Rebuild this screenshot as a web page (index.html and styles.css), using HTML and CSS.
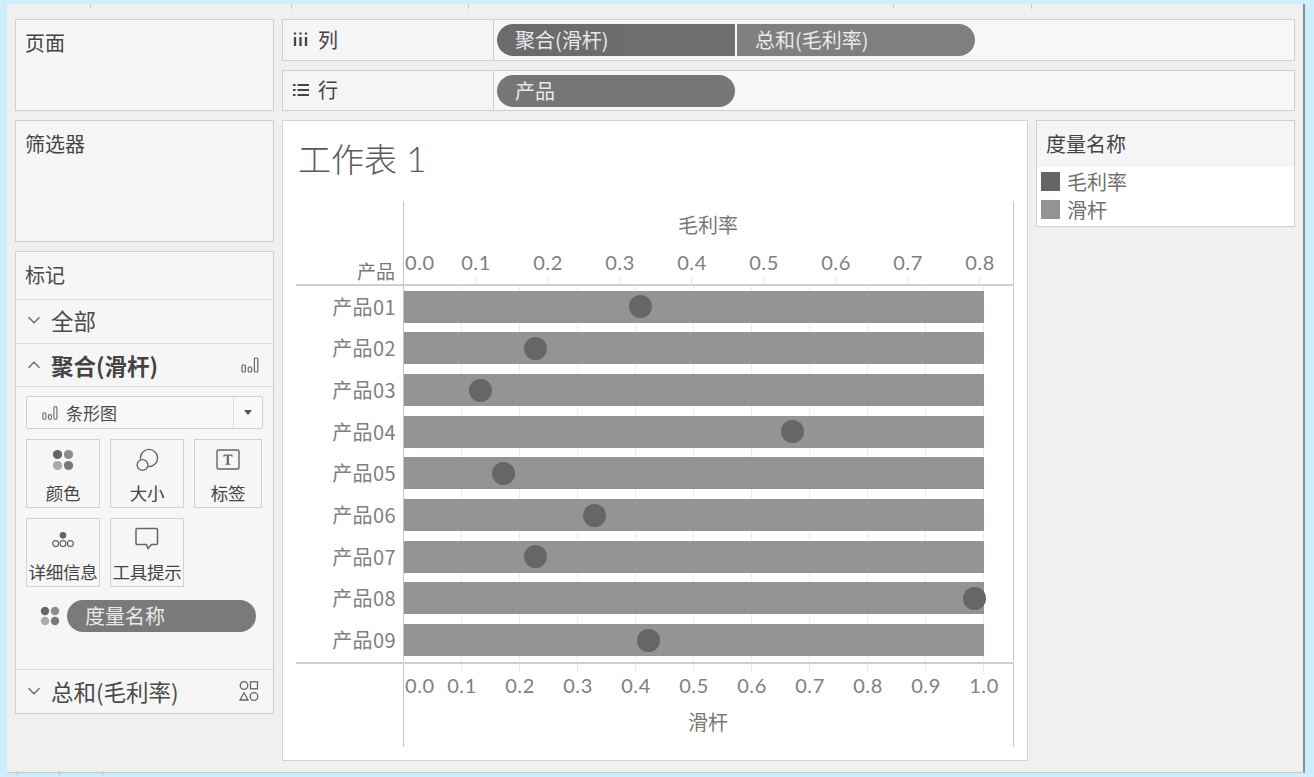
FILE: index.html
```html
<!DOCTYPE html>
<html lang="zh">
<head>
<meta charset="utf-8">
<title>工作表 1</title>
<link rel="stylesheet" href="styles.css">
</head>
<body>
<svg class="defs" width="0" height="0" aria-hidden="true">
  <symbol id="bars" viewBox="0 0 18 18">
    <g fill="none" stroke="#666" stroke-width="1.2"><rect x="1" y="9" width="3.4" height="7" rx="1"/><rect x="7.2" y="11" width="3.4" height="5" rx="1"/><rect x="13.4" y="2" width="3.4" height="14" rx="1"/></g>
  </symbol>
  <symbol id="dots" viewBox="0 0 22 22">
    <circle cx="5.5" cy="5.5" r="4.6" fill="#666"/><circle cx="16.5" cy="5.5" r="4.6" fill="#8c8c8c"/><circle cx="5.5" cy="16.5" r="4.6" fill="#aaa"/><circle cx="16.5" cy="16.5" r="4.6" fill="#777"/>
  </symbol>
</svg>
<div class="app">
  <i class="tick t1"></i><i class="tick t2"></i><i class="tick t3"></i><i class="tick t4"></i><i class="tick t5"></i>
  <i class="tick b1"></i><i class="tick b2"></i><i class="tick b3"></i>
  <aside class="side">
    <section class="panel pages"><h2 class="panel-title">页面</h2></section>
    <section class="panel filters"><h2 class="panel-title">筛选器</h2></section>
    <section class="panel marks">
      <h2 class="marks-title">标记</h2>
      <div class="mark-row all">
        <svg class="chev" viewBox="0 0 14 8"><path d="M1.5 1.2 7 6.8l5.5-5.6" fill="none" stroke="#666" stroke-width="1.3"/></svg>
        <span>全部</span>
      </div>
      <div class="mark-row agg">
        <svg class="chev" viewBox="0 0 14 8"><path d="M1.5 6.8 7 1.2l5.5 5.6" fill="none" stroke="#666" stroke-width="1.3"/></svg>
        <strong>聚合(滑杆)</strong>
        <svg class="row-icon"><use href="#bars"/></svg>
      </div>
      <div class="marks-body">
        <div class="select">
          <svg class="select-icon"><use href="#bars"/></svg>
          <span class="select-text">条形图</span>
          <span class="select-arrow"></span>
        </div>
        <div class="cards">
          <div class="card">
            <svg class="card-icon" viewBox="0 0 24 24"><use href="#dots" width="22" height="22" x="1" y="1"/></svg>
            <span>颜色</span>
          </div>
          <div class="card">
            <svg class="card-icon" viewBox="0 0 24 24"><g fill="none" stroke="#666" stroke-width="1.4"><circle cx="14" cy="10" r="8.6"/><circle cx="7.5" cy="17" r="5.4" fill="#f6f6f6"/></g></svg>
            <span>大小</span>
          </div>
          <div class="card">
            <svg class="card-icon" viewBox="0 0 24 24"><rect x="1" y="2" width="22" height="19" rx="1.5" fill="none" stroke="#666" stroke-width="1.4"/><path d="M7.5 6.5h9v2.6h-.8l-.5-1.4h-2.3v8h1.4v1h-5v-1h1.4v-8H8.800l-.5 1.400h-.8z" fill="#666"/></svg>
            <span>标签</span>
          </div>
          <div class="card">
            <svg class="card-icon" viewBox="0 0 26 24"><circle cx="13" cy="8" r="3.600" fill="#666"/><g fill="none" stroke="#666" stroke-width="1.300"><circle cx="5" cy="17" r="3.200"/><circle cx="13" cy="17" r="3.200"/><circle cx="21" cy="17" r="3.200"/></g></svg>
            <span>详细信息</span>
          </div>
          <div class="card">
            <svg class="card-icon" viewBox="0 0 24 24"><path d="M2.500 1.500h19a1 1 0 0 1 1 1v14a1 1 0 0 1-1 1h-5l-3.500 4-1.500-4h-9.500a1 1 0 0 1-1-1v-14a1 1 0 0 1 1-1z" fill="none" stroke="#666" stroke-width="1.500"/></svg>
            <span>工具提示</span>
          </div>
        </div>
        <div class="field">
          <svg class="field-icon"><use href="#dots"/></svg>
          <div class="pill field-pill">度量名称</div>
        </div>
      </div>
      <div class="mark-row sum">
        <svg class="chev" viewBox="0 0 14 8"><path d="M1.5 1.2 7 6.8l5.5-5.6" fill="none" stroke="#666" stroke-width="1.3"/></svg>
        <span>总和(毛利率)</span>
        <svg class="row-icon shapes" viewBox="0 0 20 22"><g fill="none" stroke="#666" stroke-width="1.300"><circle cx="5" cy="5.500" r="3.800"/><rect x="11.500" y="1.800" width="7" height="7"/><path d="M5 12.800 9 20H1z"/><circle cx="15" cy="16.500" r="3.800"/></g></svg>
      </div>
    </section>
  </aside>
  <main class="main">
    <div class="shelf">
      <div class="shelf-label">
        <svg class="shelf-icon" viewBox="0 0 16 16"><path d="M2 1.500v2M2 6v9M7.500 1.500v2M7.500 6v9M13 1.500v2M13 6v9" stroke="#444" stroke-width="2.300" fill="none"/></svg>
        <span>列</span>
      </div>
      <div class="shelf-pills">
        <div class="pill pill-left">聚合(滑杆)</div>
        <div class="pill pill-right">总和(毛利率)</div>
      </div>
    </div>
    <div class="shelf">
      <div class="shelf-label">
        <svg class="shelf-icon" viewBox="0 0 16 16"><path d="M0 3h2.500M4.500 3H16M0 8h2.500M4.500 8H16M0 13h2.500M4.500 13H16" stroke="#444" stroke-width="1.800" fill="none"/></svg>
        <span>行</span>
      </div>
      <div class="shelf-pills">
        <div class="pill pill-single">产品</div>
      </div>
    </div>
    <div class="work">
      <section class="sheet">
        <h1 class="sheet-title">工作表 <span class="title-num">1</span></h1>
        <div class="chart">
          <div class="chart-head">
            <div class="corner">产品</div>
            <div class="axis axis-top">
              <div class="axis-name">毛利率</div>
              <span class="tl first">0.0</span>
              <span class="tl" style="--t:1">0.1</span>
              <span class="tl" style="--t:2">0.2</span>
              <span class="tl" style="--t:3">0.3</span>
              <span class="tl" style="--t:4">0.4</span>
              <span class="tl" style="--t:5">0.5</span>
              <span class="tl" style="--t:6">0.6</span>
              <span class="tl" style="--t:7">0.7</span>
              <span class="tl" style="--t:8">0.8</span>
            </div>
          </div>
          <div class="rows">
            <div class="row"><div class="row-name">产品01</div><div class="plot"><div class="bar"></div><div class="dot" style="--v:.328"></div></div></div>
            <div class="row"><div class="row-name">产品02</div><div class="plot"><div class="bar"></div><div class="dot" style="--v:.183"></div></div></div>
            <div class="row"><div class="row-name">产品03</div><div class="plot"><div class="bar"></div><div class="dot" style="--v:.106"></div></div></div>
            <div class="row"><div class="row-name">产品04</div><div class="plot"><div class="bar"></div><div class="dot" style="--v:.539"></div></div></div>
            <div class="row"><div class="row-name">产品05</div><div class="plot"><div class="bar"></div><div class="dot" style="--v:.138"></div></div></div>
            <div class="row"><div class="row-name">产品06</div><div class="plot"><div class="bar"></div><div class="dot" style="--v:.265"></div></div></div>
            <div class="row"><div class="row-name">产品07</div><div class="plot"><div class="bar"></div><div class="dot" style="--v:.182"></div></div></div>
            <div class="row"><div class="row-name">产品08</div><div class="plot"><div class="bar"></div><div class="dot" style="--v:.792"></div></div></div>
            <div class="row"><div class="row-name">产品09</div><div class="plot"><div class="bar"></div><div class="dot" style="--v:.339"></div></div></div>
          </div>
          <div class="chart-foot">
            <div class="corner-empty"></div>
            <div class="axis axis-bottom">
              <span class="bl first">0.0</span>
              <span class="bl" style="--t:1">0.1</span>
              <span class="bl" style="--t:2">0.2</span>
              <span class="bl" style="--t:3">0.3</span>
              <span class="bl" style="--t:4">0.4</span>
              <span class="bl" style="--t:5">0.5</span>
              <span class="bl" style="--t:6">0.6</span>
              <span class="bl" style="--t:7">0.7</span>
              <span class="bl" style="--t:8">0.8</span>
              <span class="bl" style="--t:9">0.9</span>
              <span class="bl" style="--t:10">1.0</span>
              <div class="axis-name bottom-name">滑杆</div>
            </div>
          </div>
        </div>
      </section>
      <section class="legend">
        <h2 class="legend-title">度量名称</h2>
        <ul class="legend-list">
          <li class="legend-item"><i class="swatch dark"></i>毛利率</li>
          <li class="legend-item"><i class="swatch light"></i>滑杆</li>
        </ul>
      </section>
    </div>
  </main>
</div>
</body>
</html>
```
FILE: styles.css
```css
* { box-sizing: border-box; }
html, body { margin: 0; height: 100%; }
body {
  background: #cdeefc;
  padding: 4px 9px 4px 7px;
  font-family: "Noto Sans CJK SC", "Lato", sans-serif;
  color: #4a4a4a;
  overflow: hidden;
}
.defs { position: absolute; }
h1, h2, ul { margin: 0; padding: 0; font-weight: 400; }
ul { list-style: none; }

.app {
  position: relative;
  height: 769px;
  background: #f0f0f0;
  border-right: 2px solid #8d8d8d;
  border-bottom: 1px solid #c4c4c4;
  padding: 15px 7px 0 8px;
  display: flex;
  gap: 8px;
}
.tick { position: absolute; width: 1px; height: 5px; background: #c9c9c9; top: 0; }
.t1 { left: 83px; } .t2 { left: 284px; } .t3 { left: 461px; } .t4 { left: 886px; } .t5 { left: 1024px; }
.b1, .b2, .b3 { top: auto; bottom: -4px; }
.b1 { left: 10px; } .b2 { left: 52px; } .b3 { left: 95px; }

.side { width: 259px; display: flex; flex-direction: column; gap: 9px; }
.panel { background: #f6f6f6; border: 1.500px solid #d0d0d0; }
.pages { height: 92px; }
.filters { height: 122px; }
.panel-title { font-size: 20px; line-height: 26px; padding: 10px 0 0 9px; color: #444; }
.marks { height: 462.500px; display: flex; flex-direction: column; }
.marks-title { font-size: 20px; line-height: 26px; padding: 10px 0 10px 9px; height: 48px; border-bottom: 1px solid #dcdcdc; }
.mark-row { display: flex; align-items: center; font-size: 22.500px; color: #4a4a4a; padding: 0 14px 0 11px; border-bottom: 1px solid #dcdcdc; }
.mark-row.all { height: 44px; padding-bottom: 4px; }
.mark-row.agg { height: 43px; }
.mark-row.sum { height: 44px; border-bottom: 0; border-top: 1px solid #dcdcdc; padding-bottom: 1px; }
.mark-row strong { font-weight: 700; color: #444; }
.chev { width: 14px; height: 8px; margin-right: 10px; flex: none; }
.row-icon { width: 18px; height: 18px; margin-left: auto; }
.row-icon.shapes { width: 20px; height: 22px; }

.marks-body { flex: 1; padding: 9px 10px 0 10px; }
.select {
  height: 33px; width: 237px; background: #f8f8f8; border: 1.500px solid #cfcfcf; border-radius: 2px;
  display: flex; align-items: center; padding-left: 14px; font-size: 17px;
}
.select-icon { width: 18px; height: 16px; margin-right: 7px; }
.select-text { flex: 1; }
.select-arrow {
  width: 29px; height: 100%; border-left: 1px solid #dedede; position: relative;
}
.select-arrow::after {
  content: ""; position: absolute; left: 10px; top: 13px;
  border-left: 4.500px solid transparent; border-right: 4.500px solid transparent; border-top: 5px solid #555;
}
.cards { display: grid; grid-template-columns: 74px 74px 68px; gap: 10px; margin-top: 10px; }
.card {
  height: 69px; border: 1.500px solid #d2d2d2; background: #f6f6f6;
  display: flex; flex-direction: column; align-items: center; font-size: 17.500px; line-height: 22px; color: #444;
  white-space: nowrap; padding-top: 8px; letter-spacing: -.2px;
}
.card span { margin-top: 10px; }
.card-icon { width: 24px; height: 24px; }
.field { display: flex; align-items: center; margin-top: 13px; }
.field-icon { width: 20px; height: 20px; margin: 0 7px 0 14px; }
.pill {
  background: #7b797b;
  color: #e9e9e9; font-size: 20px; height: 32px; line-height: 31px; padding-left: 18px;
}
.field-pill { width: 189px; border-radius: 16px; }

.main { width: 1013px; display: flex; flex-direction: column; gap: 9px; }
.shelf { height: 42px; background: #f7f7f7; border: 1.500px solid #d0d0d0; display: flex; }
.shelf:nth-child(2) { height: 41px; }
.shelf-label { width: 211px; background: #f5f5f5; border-right: 1.500px solid #d0d0d0; display: flex; align-items: center; padding: 0 0 2px 10px; font-size: 20px; color: #444; gap: 9px; }
.shelf-icon { width: 16px; height: 16px; }
.shelf-pills { display: flex; gap: 2px; padding: 3.500px 0 0 3px; }
.pill-left { width: 238px; border-radius: 16px 0 0 16px; background: linear-gradient(to right, #6c6a6c, #706e70); }
.pill-right { width: 238px; border-radius: 0 16px 16px 0; background: #807e80; }
.pill-single { width: 238px; border-radius: 16px; background: #777577; }

.work { display: flex; gap: 8px; align-items: flex-start; }
.sheet { width: 746px; height: 640.500px; background: #fff; border: 1.500px solid #d4d4d4; padding: 0 13px; }
.sheet-title { font-size: 33px; line-height: 46px; color: #5a5a5a; padding: 14px 0 0 2px; height: 80px; font-family: "Noto Sans CJK SC", sans-serif; font-weight: 300; white-space: nowrap; }
.title-num { font-family: "Lato", sans-serif; font-size: 35px; margin-left: 2px; }

.chart { width: 718px; }
.chart-head, .chart-foot { display: flex; }
.chart-head { height: 85px; border-bottom: 2px solid #cfcfcf; }
.corner { width: 107px; align-self: flex-end; text-align: right; padding: 0 8px 0 0; font-size: 19px; line-height: 26px; color: #777; }
.corner-empty { width: 107px; }
.axis { position: relative; flex: 1; border-left: 1.500px solid #c4c4c4; border-right: 1.500px solid #c4c4c4; font-family: "Lato", sans-serif; color: #808080; font-size: 20px; letter-spacing: .6px; }
.axis-top {
  background: repeating-linear-gradient(to right, transparent 0 71px, #e8e8e8 71px 72px) left bottom / 100% 8px no-repeat;
}
.axis-bottom {
  height: 83px;
  background: repeating-linear-gradient(to right, transparent 0 57px, #e8e8e8 57px 58px) left top / 100% 7px no-repeat;
}
.axis-name { position: absolute; left: 304px; transform: translateX(-50%); font-family: "Noto Sans CJK SC", sans-serif; font-size: 20px; letter-spacing: 0; line-height: 26px; color: #777; top: 11px; white-space: nowrap; }
.bottom-name { top: 45px; }
.tl, .bl { position: absolute; transform: translateX(-50%); line-height: 24px; }
.tl { top: 49px; left: calc(var(--t) * 72px); }
.bl { top: 9px; left: calc(var(--t) * 58px); }
.first { left: 1px; transform: none; }

.rows {
  height: 375.500px;
  display: grid;
  grid-auto-rows: 41.670px;
}
.row { display: flex; align-items: center; }
.row-name { width: 107px; text-align: right; padding-right: 7px; font-size: 20px; line-height: 26px; color: #808080; font-family: "Noto Sans CJK SC", sans-serif; white-space: nowrap; letter-spacing: .4px; }
.plot {
  position: relative; flex: 1; height: 100%;
  display: flex; align-items: center;
  border-left: 1.500px solid #c4c4c4; border-right: 1.500px solid #c4c4c4;
  background: repeating-linear-gradient(to right, transparent 0 57px, #ececec 57px 58px);
}
.bar { width: 580px; height: 32px; background: #959395; }
.dot { position: absolute; top: 50%; left: calc(var(--v) * 720px); width: 23px; height: 23px; margin: -11.500px 0 0 -11.500px; border-radius: 50%; background: #676567; }
.chart-foot { border-top: 2px solid #cfcfcf; }

.legend { width: 259px; height: 106.500px; background: #fff; border: 1.500px solid #d0d0d0; }
.legend-title { background: #f5f5f5; height: 46px; font-size: 20px; line-height: 26px; padding: 10px 0 0 9px; color: #444; }
.legend-list { padding: 0 0 0 4px; }
.legend-item { display: flex; align-items: center; height: 28px; font-size: 20px; color: #707070; gap: 7px; }
.swatch { width: 19px; height: 19px; }
.swatch.dark { background: #666466; }
.swatch.light { background: #959395; }
```
